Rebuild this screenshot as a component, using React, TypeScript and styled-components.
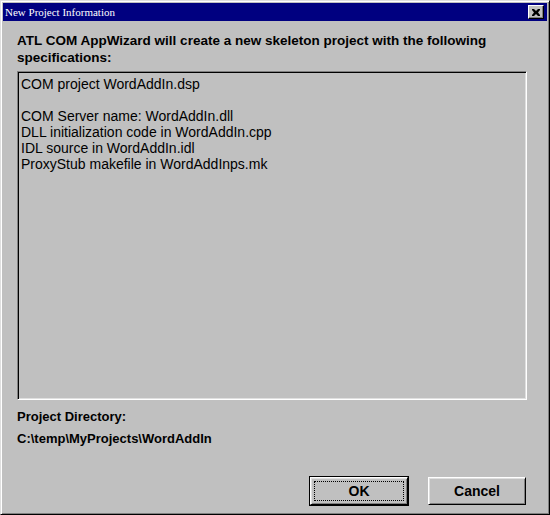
import React from "react";
import styled, { createGlobalStyle } from "styled-components";

const Global = createGlobalStyle`
  html, body { margin: 0; padding: 0; background: #c0c0c0; }
  body { font-family: "Liberation Sans", Arial, sans-serif; }
`;

const Window = styled.div`
  box-sizing: border-box;
  width: 550px;
  height: 515px;
  background: #c0c0c0;
  border-top: 1px solid #dfdfdf;
  border-left: 1px solid #dfdfdf;
  border-right: 1px solid #000;
  border-bottom: 1px solid #000;
  box-shadow: inset 1px 1px 0 #fff, inset -1px -1px 0 #808080;
  padding: 2px;
  display: flex;
  flex-direction: column;
`;

const TitleBar = styled.div`
  height: 18px;
  background: #000080;
  display: flex;
  align-items: center;
  justify-content: space-between;
  padding: 0 3px 0 2px;
`;

const TitleText = styled.span`
  color: #fff;
  font-family: "Liberation Serif", "Times New Roman", serif;
  font-size: 11px;
  line-height: 18px;
`;

const CloseButton = styled.div`
  box-sizing: border-box;
  width: 16px;
  height: 14px;
  background: #c0c0c0;
  border-top: 1px solid #fff;
  border-left: 1px solid #fff;
  border-right: 1px solid #000;
  border-bottom: 1px solid #000;
  box-shadow: inset -1px -1px 0 #808080;
  display: flex;
  align-items: center;
  justify-content: center;
`;

const Body = styled.div`
  flex: 1;
  display: flex;
  flex-direction: column;
  padding: 11px 20px 6px 14px;
`;

const Heading = styled.div`
  font-weight: bold;
  font-size: 13.5px;
  line-height: 17px;
  color: #000;
`;

const InfoBox = styled.div`
  box-sizing: border-box;
  margin-top: 5px;
  height: 329px;
  background: #c0c0c0;
  border-top: 1px solid #808080;
  border-left: 1px solid #808080;
  border-right: 1px solid #fff;
  border-bottom: 1px solid #fff;
  box-shadow: inset 1px 1px 0 #000, inset -1px -1px 0 #dfdfdf;
  padding: 4px 3px;
  font-size: 14px;
  line-height: 16px;
  color: #000;
`;

const InfoLine = styled.div`
  min-height: 16px;
  white-space: pre;
`;

const Label = styled.div<{ $gap: number }>`
  font-weight: bold;
  font-size: 13px;
  line-height: 16px;
  color: #000;
  margin-top: ${(p) => p.$gap}px;
`;

const ButtonRow = styled.div`
  margin-top: auto;
  display: flex;
  justify-content: flex-end;
  gap: 18px;
`;

const Button = styled.div<{ $default?: boolean }>`
  box-sizing: border-box;
  width: 100px;
  height: 30px;
  background: #c0c0c0;
  border: 1px solid ${(p) => (p.$default ? "#000" : "transparent")};
  display: flex;
  font-weight: bold;
  font-size: 14px;
  color: #000;
`;

const ButtonFace = styled.div<{ $focus?: boolean }>`
  flex: 1;
  display: flex;
  align-items: center;
  justify-content: center;
  border-top: 1px solid #fff;
  border-left: 1px solid #fff;
  border-right: 1px solid #000;
  border-bottom: 1px solid #000;
  box-shadow: inset 1px 1px 0 #dfdfdf, inset -1px -1px 0 #808080;
  position: relative;
  &::after {
    content: "";
    display: ${(p) => (p.$focus ? "block" : "none")};
    position: absolute;
    left: 3px;
    top: 3px;
    right: 3px;
    bottom: 3px;
    border: 1px dotted #000;
  }
`;

const lines = [
  "COM project WordAddIn.dsp",
  "",
  "COM Server name: WordAddIn.dll",
  "DLL initialization code in WordAddIn.cpp",
  "IDL source in WordAddIn.idl",
  "ProxyStub makefile in WordAddInps.mk",
];

export default function App() {
  return (
    <>
      <Global />
      <Window>
        <TitleBar>
          <TitleText>New Project Information</TitleText>
          <CloseButton>
            <svg width="8" height="7" viewBox="0 0 8 7">
              <path d="M0 0h2l2 2 2-2h2v1L6 3.5 8 6v1H6L4 5 2 7H0V6l2-2.5L0 1z" fill="#000" />
            </svg>
          </CloseButton>
        </TitleBar>
        <Body>
          <Heading>
            ATL COM AppWizard will create a new skeleton project with the following specifications:
          </Heading>
          <InfoBox>
            {lines.map((l, i) => (
              <InfoLine key={i}>{l}</InfoLine>
            ))}
          </InfoBox>
          <Label $gap={9}>Project Directory:</Label>
          <Label $gap={6}>C:\temp\MyProjects\WordAddIn</Label>
          <ButtonRow>
            <Button $default>
              <ButtonFace $focus>OK</ButtonFace>
            </Button>
            <Button>
              <ButtonFace>Cancel</ButtonFace>
            </Button>
          </ButtonRow>
        </Body>
      </Window>
    </>
  );
}
